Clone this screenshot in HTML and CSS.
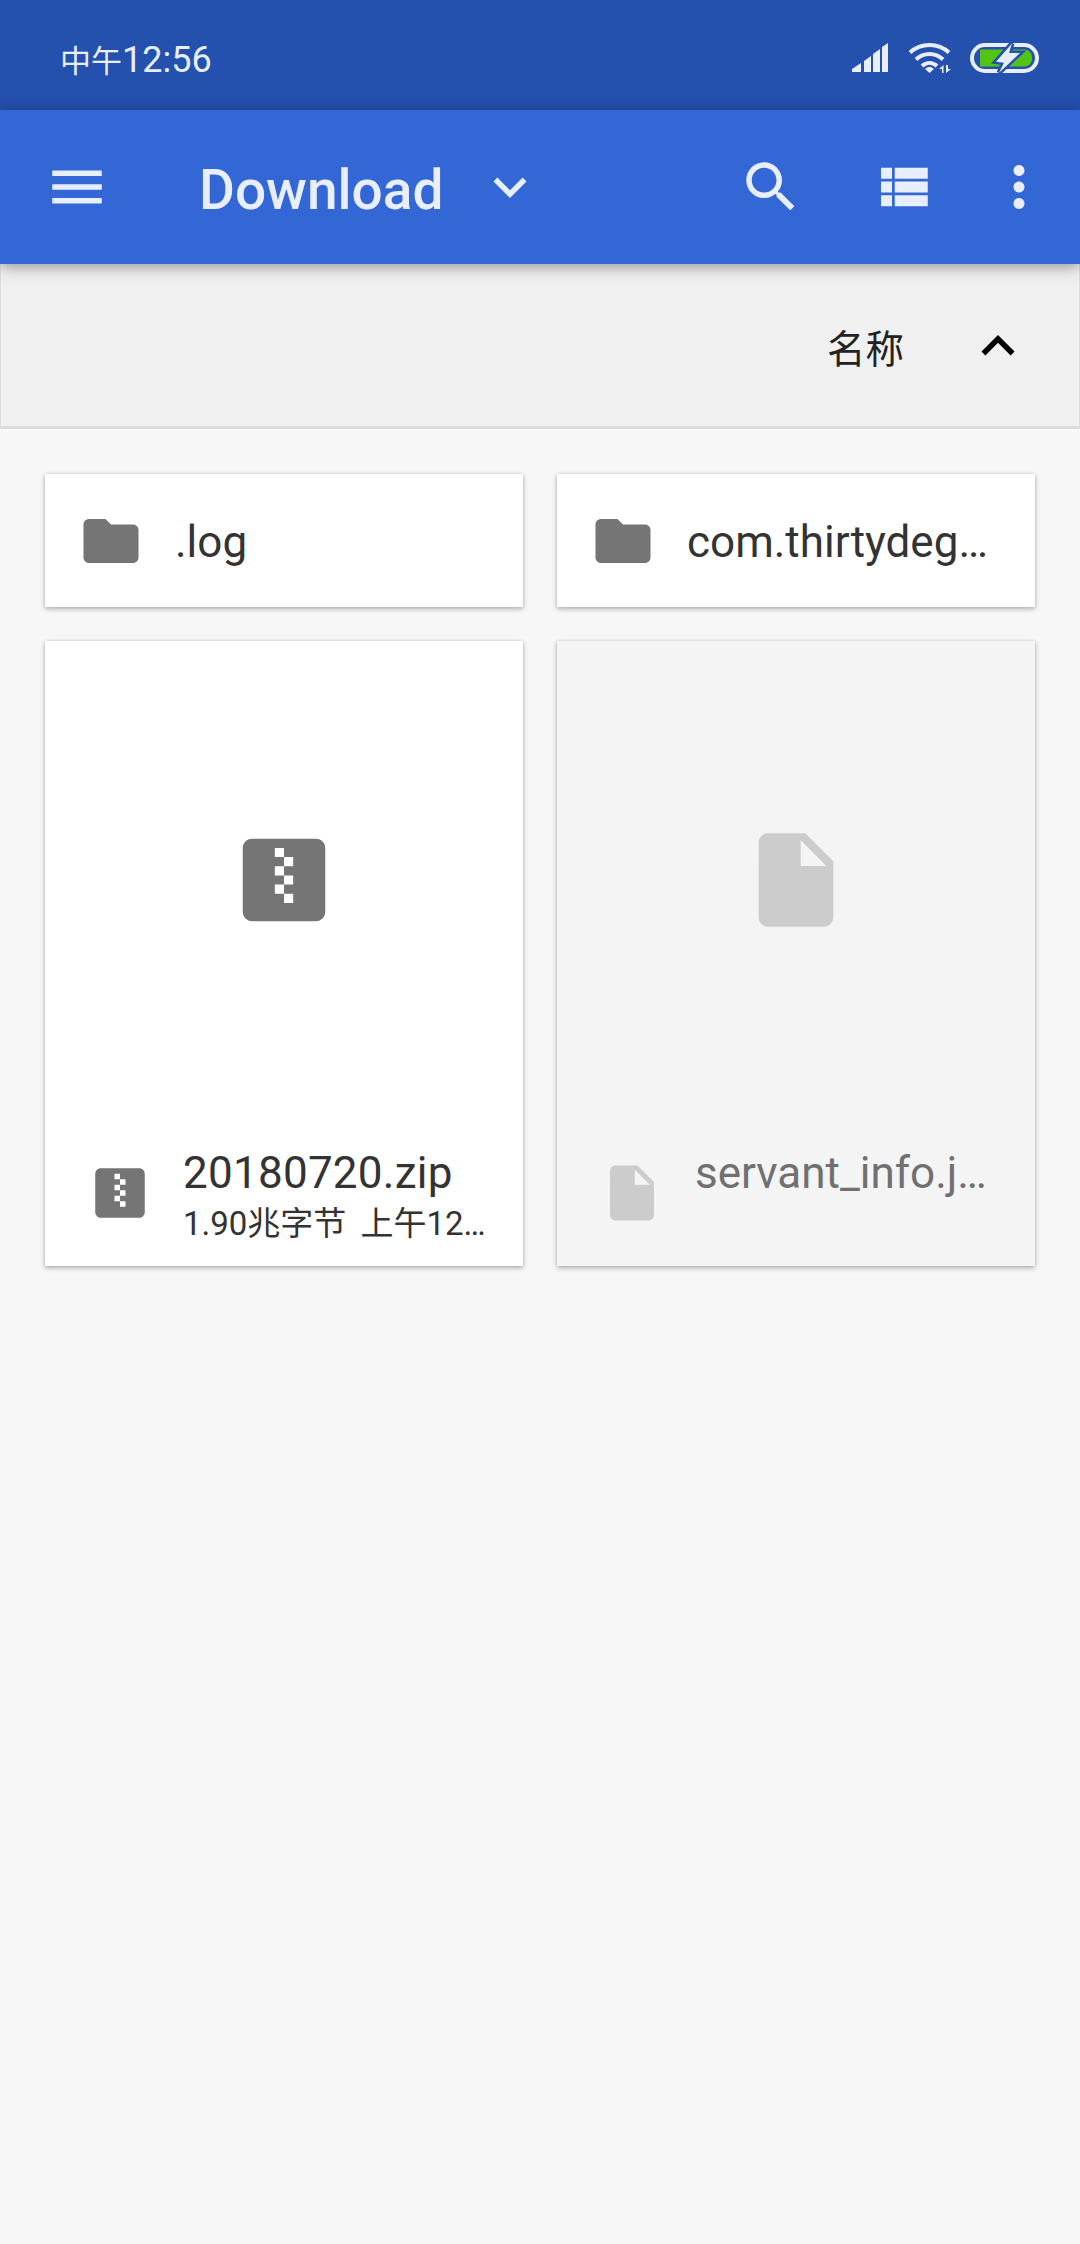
FILE: index.html
```html
<!DOCTYPE html>
<html lang="zh-CN">
<head>
    <meta charset="UTF-8">
    <title>Download</title>
    <link rel="stylesheet" href="styles.css">
</head>
<body>
<div class="status-bar">
    <span class="clock"><span class="noon">中午</span>12:56</span>
    <div class="status-icons">
        <svg class="ic-signal" width="36" height="29" viewBox="0 0 36 29">
            <polygon points="0,29 0,26 9,20 9,29"/>
            <polygon points="12,29 12,18 19,13 19,29"/>
            <polygon points="21,29 21,11 28,6 28,29"/>
            <polygon points="30,29 30,4 36,0 36,29"/>
        </svg>
        <svg class="ic-wifi" width="44" height="33" viewBox="0 0 44 33">
            <path class="arc" d="M2 11.5C13 1.5 30 1.500 41 11.500"/>
            <path class="arc" d="M8 18.500C15.500 11 27.500 11 35 18.500"/>
            <path class="arc" d="M14 25C18.500 21 24.500 21 29 25"/>
            <polygon points="21.500,32 17,28 20,26 23,26 26,28"/>
            <polygon points="34,32 34,28 31,28 35.500,24 35.500,32"/>
            <polygon points="38,24 38,32 43,28 40,28 40,24"/>
        </svg>
        <svg class="ic-battery" width="69" height="32" viewBox="0 0 69 32">
            <rect class="shell" x="2" y="3" width="65" height="26" rx="13"/>
            <path class="charge" d="M10 7.500H54C59 7.500 62 11 62 16C62 21 59 24.500 54 24.500H10Z"/>
            <polygon class="bolt" points="42,1.500 26,19.700 34,20.700 29,30.700 50,11 39,11"/>
        </svg>
    </div>
</div>

<div class="toolbar">
    <svg class="icon menu-icon" viewBox="0 0 24 24"><path d="M3 18h18v-2H3v2zm0-5h18v-2H3v2zm0-7v2h18V6H3z"/></svg>
    <span class="title">Download</span>
    <svg class="icon drop-icon" viewBox="0 0 24 24"><path d="M16.590 8.590L12 13.170 7.410 8.590 6 10l6 6 6-6z"/></svg>
    <div class="actions">
        <svg class="icon" viewBox="0 0 24 24"><path d="M15.500 14h-.79l-.28-.27C15.410 12.590 16 11.110 16 9.500 16 5.910 13.090 3 9.500 3S3 5.910 3 9.500 5.910 16 9.500 16c1.610 0 3.090-.59 4.230-1.570l.27.28v.79l5 4.990L20.490 19l-4.990-5zm-6 0C7.010 14 5 11.990 5 9.500S7.010 5 9.500 5 14 7.010 14 9.500 11.990 14 9.500 14z"/></svg>
        <svg class="icon" viewBox="0 0 24 24"><path d="M4 14h4v-4H4v4zm0 5h4v-4H4v4zM4 9h4V5H4v4zm5 5h12v-4H9v4zm0 5h12v-4H9v4zM9 5v4h12V5H9z"/></svg>
        <svg class="icon" viewBox="0 0 24 24"><path d="M12 8c1.100 0 2-.9 2-2s-.9-2-2-2-2 .9-2 2 .9 2 2 2zm0 2c-1.100 0-2 .9-2 2s.9 2 2 2 2-.9 2-2-.9-2-2-2zm0 6c-1.100 0-2 .9-2 2s.9 2 2 2 2-.9 2-2-.9-2-2-2z"/></svg>
    </div>
</div>

<div class="sort-bar">
    <span class="sort-name">名称</span>
    <svg class="icon sort-icon" viewBox="0 0 24 24"><path d="M12 8l-6 6 1.410 1.410L12 10.830l4.590 4.580L18 14z"/></svg>
</div>

<div class="grid">
    <div class="card folder">
        <svg class="icon ic-grey" viewBox="0 0 24 24"><path d="M10 4H4c-1.100 0-1.990.9-1.990 2L2 18c0 1.100.9 2 2 2h16c1.100 0 2-.9 2-2V8c0-1.100-.9-2-2-2h-8l-2-2z"/></svg>
        <span class="name">.log</span>
    </div>
    <div class="card folder">
        <svg class="icon ic-grey" viewBox="0 0 24 24"><path d="M10 4H4c-1.100 0-1.990.9-1.990 2L2 18c0 1.100.9 2 2 2h16c1.100 0 2-.9 2-2V8c0-1.100-.9-2-2-2h-8l-2-2z"/></svg>
        <span class="name">com.thirtydeg…</span>
    </div>
    <div class="card file">
        <div class="preview">
            <svg class="big-zip ic-grey" viewBox="0 0 24 24">
                <path d="M19 3H5c-1.100 0-2 .9-2 2v14c0 1.100.9 2 2 2h14c1.100 0 2-.9 2-2V5c0-1.100-.9-2-2-2z"/>
                <path class="zip-teeth" d="M10 5h2v2h-2zM12 7h2v2h-2zM10 9h2v2h-2zM12 11h2v2h-2zM10 13h2v2h-2zM12 15h2v2h-2z"/>
            </svg>
        </div>
        <div class="file-foot">
            <svg class="icon ic-grey" viewBox="0 0 24 24">
                <path d="M19 3H5c-1.100 0-2 .9-2 2v14c0 1.100.9 2 2 2h14c1.100 0 2-.9 2-2V5c0-1.100-.9-2-2-2z"/>
                <path class="zip-teeth" d="M10 5h2v2h-2zM12 7h2v2h-2zM10 9h2v2h-2zM12 11h2v2h-2zM10 13h2v2h-2zM12 15h2v2h-2z"/>
            </svg>
            <div class="file-text">
                <div class="name zip-name">20180720.zip</div>
                <div class="meta">1.90兆字节 上午12…</div>
            </div>
        </div>
    </div>
    <div class="card file disabled">
        <div class="preview">
            <svg class="big-icon ic-light" viewBox="0 0 24 24"><path d="M6 2c-1.100 0-1.990.9-1.990 2L4 20c0 1.100.89 2 1.990 2H18c1.100 0 2-.9 2-2V8l-6-6H6zm7 7V3.500L18.500 9H13z"/></svg>
        </div>
        <div class="file-foot">
            <svg class="icon ic-light" viewBox="0 0 24 24"><path d="M6 2c-1.100 0-1.990.9-1.990 2L4 20c0 1.100.89 2 1.990 2H18c1.100 0 2-.9 2-2V8l-6-6H6zm7 7V3.500L18.500 9H13z"/></svg>
            <div class="file-text">
                <div class="name">servant_info.j…</div>
                <div class="meta">&nbsp;</div>
            </div>
        </div>
    </div>
</div>
</body>
</html>
```

FILE: styles.css
```css
* {
    margin: 0;
    padding: 0;
    box-sizing: border-box;
}
html, body {
    height: 100%;
}
body {
    background-color: #f7f7f7;
    font-family: Roboto, "Noto Sans CJK SC", sans-serif;
    color: #333;
    overflow: hidden;
}
svg {
    display: block;
    flex: none;
}
.icon {
    width: 66px;
    height: 66px;
    fill: currentColor;
}
.big-icon {
    width: 112px;
    height: 112px;
}
.big-zip {
    width: 110px;
    height: 110px;
}
.ic-grey {
    fill: #757575;
}
.ic-light {
    fill: #ccc;
}
.zip-teeth {
    fill: #fff;
}

/* status bar */
.status-bar {
    display: flex;
    align-items: center;
    justify-content: space-between;
    height: 110px;
    padding: 0 41px 0 60px;
    background-color: #2450ae;
    color: #e8eefc;
}
.clock {
    font-size: 36px;
    line-height: 42px;
    margin-top: 11px;
}
.noon {
    font-size: 31px;
}
.status-icons {
    display: flex;
    align-items: center;
    margin-top: 5px;
}
.ic-signal {
    fill: #e8eefc;
    margin-right: 20px;
}
.ic-wifi {
    fill: #e8eefc;
    margin-right: 18px;
}
.ic-wifi .arc {
    fill: none;
    stroke: #e8eefc;
    stroke-width: 4;
}
.ic-battery .shell {
    fill: none;
    stroke: #e8eefc;
    stroke-width: 4;
}
.ic-battery .charge {
    fill: #54c414;
}
.ic-battery .bolt {
    fill: #e8eefc;
    stroke: #2450ae;
    stroke-width: 5;
    paint-order: stroke;
}

/* toolbar */
.toolbar {
    position: relative;
    z-index: 2;
    display: flex;
    align-items: center;
    height: 154px;
    padding-left: 44px;
    background-color: #3367d6;
    color: #e8eefc;
    box-shadow: 0 3px 14px rgba(0, 0, 0, 0.38);
}
.title {
    margin: 5px 0 0 89px;
    font-size: 55px;
    font-weight: 500;
}
.drop-icon {
    margin-left: 34px;
}
.actions {
    display: flex;
    margin-left: auto;
    margin-right: 28px;
}
.actions .icon + .icon {
    margin-left: 66px;
}
.actions .icon:last-child {
    margin-left: 50px;
}

/* sort bar */
.sort-bar {
    display: flex;
    align-items: center;
    justify-content: flex-end;
    height: 165px;
    padding-right: 48px;
    background-color: #f0f0f0;
    border: 1px solid #dcdcdc;
    border-top: none;
    border-bottom: 3px solid #dcdcdc;
    color: #222;
}
.sort-name {
    margin-top: 2px;
    font-size: 38.500px;
}
.sort-icon {
    margin: 2px 0 0 61px;
    color: #000;
}

/* cards */
.grid {
    display: grid;
    grid-template-columns: 478px 478px;
    grid-template-rows: 133px 625px;
    gap: 34px;
    padding: 45px 0 0 45px;
}
.card {
    background-color: #fff;
    box-shadow: 0 2px 5px rgba(0, 0, 0, 0.28), 0 0 3px rgba(0, 0, 0, 0.12);
}
.folder {
    display: flex;
    align-items: center;
    padding-left: 33px;
}
.folder .name {
    margin: 2px 0 0 31px;
}
.name {
    font-size: 44px;
    line-height: 52px;
    white-space: nowrap;
}
.zip-name {
    letter-spacing: 0.25px;
}
.file {
    display: flex;
    flex-direction: column;
}
.preview {
    flex: 1;
    display: flex;
    align-items: center;
    justify-content: center;
    padding-bottom: 2px;
}
.file-foot {
    display: flex;
    align-items: center;
    height: 146px;
    padding-left: 42px;
}
.file-text {
    margin: 8px 0 0 30px;
}
.meta {
    margin-top: 2px;
    font-size: 33px;
    line-height: 46px;
    word-spacing: 6px;
    white-space: nowrap;
}
.disabled {
    background-color: #f4f4f4;
}
.disabled .name {
    color: #707070;
}
```
